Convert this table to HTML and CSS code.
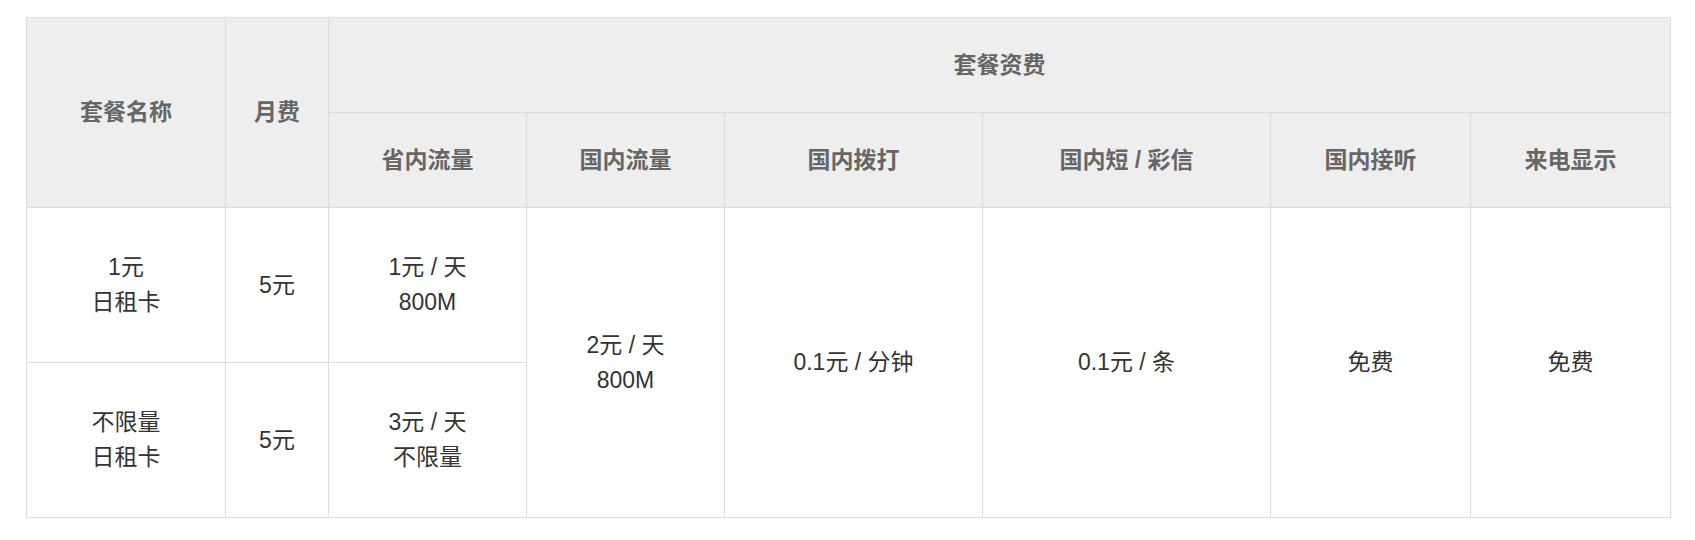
FILE: index.html
```html
<!DOCTYPE html>
<html lang="zh-CN">
<head>
<meta charset="utf-8">
<title>套餐资费</title>
<link rel="stylesheet" href="styles.css">
</head>
<body>
<div class="page">
  <table class="plan">
    <colgroup>
      <col class="c-name">
      <col class="c-fee">
      <col class="c-prov">
      <col class="c-dom">
      <col class="c-call">
      <col class="c-sms">
      <col class="c-recv">
      <col class="c-show">
    </colgroup>
    <thead>
      <tr class="hrow">
        <th rowspan="2">套餐名称</th>
        <th rowspan="2">月费</th>
        <th colspan="6">套餐资费</th>
      </tr>
      <tr class="hrow">
        <th>省内流量</th>
        <th>国内流量</th>
        <th>国内拨打</th>
        <th>国内短 / 彩信</th>
        <th>国内接听</th>
        <th>来电显示</th>
      </tr>
    </thead>
    <tbody>
      <tr class="brow">
        <td>1元<br>日租卡</td>
        <td>5元</td>
        <td>1元 / 天<br>800M</td>
        <td rowspan="2">2元 / 天<br>800M</td>
        <td rowspan="2">0.1元 / 分钟</td>
        <td rowspan="2">0.1元 / 条</td>
        <td rowspan="2">免费</td>
        <td rowspan="2">免费</td>
      </tr>
      <tr class="brow">
        <td>不限量<br>日租卡</td>
        <td>5元</td>
        <td>3元 / 天<br>不限量</td>
      </tr>
    </tbody>
  </table>
</div>
</body>
</html>
```

FILE: styles.css
```css
html, body {
  margin: 0;
  padding: 0;
  background: #ffffff;
}

.page {
  padding: 17px 0 0 26px;
}

.plan {
  border-collapse: collapse;
  table-layout: fixed;
  width: 1644px;
  font-family: "Liberation Sans", "Noto Sans CJK SC", sans-serif;
  font-size: 23px;
  line-height: 35px;
  color: #333333;
}

.c-name { width: 199px; }
.c-fee { width: 103px; }
.c-prov { width: 198px; }
.c-dom { width: 198px; }
.c-call { width: 258px; }
.c-sms { width: 288px; }
.c-recv { width: 200px; }
.c-show { width: 200px; }

.plan th,
.plan td {
  border: 1px solid #dddddd;
  text-align: center;
  vertical-align: middle;
  padding: 0;
}

.plan th {
  background: #eeeeee;
  color: #666666;
  font-weight: bold;
}

.hrow {
  height: 95px;
}

.brow {
  height: 155px;
}
```
